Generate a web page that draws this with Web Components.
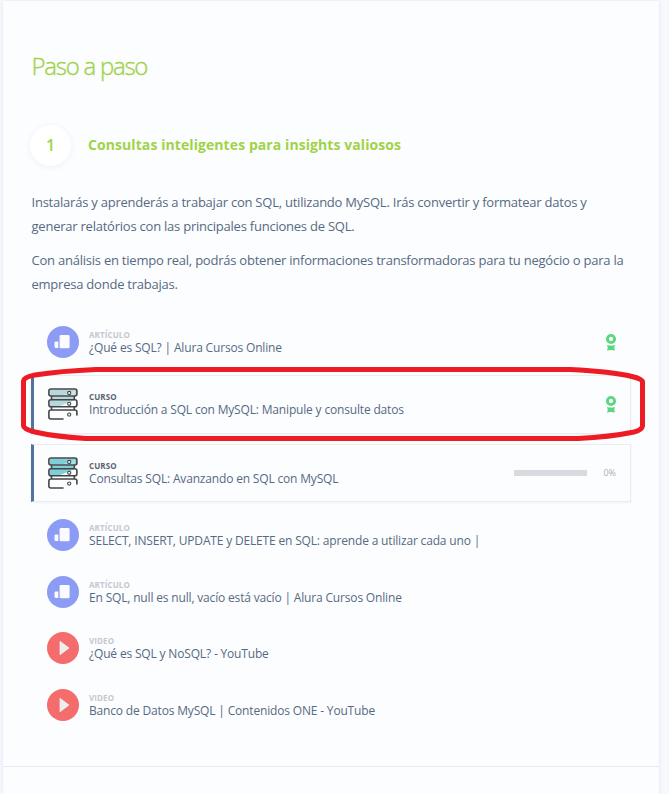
<!DOCTYPE html>
<html lang="es">
<head>
<meta charset="utf-8">
<title>Paso a paso</title>
<style>
html,body{margin:0;height:794px;overflow:hidden}
body{background:#f7f9fd;font-family:"Open Sans","Noto Sans",sans-serif;color:#566a83}
</style>
</head>
<body>
<step-page></step-page>
<script>
const ICONS={
articulo:`<svg width="32" height="32" viewBox="0 0 32 32"><circle cx="16" cy="16" r="16" fill="#8c9bf3"/><rect x="12.6" y="9" width="10" height="13.2" rx="1.3" fill="#fafaff"/><path d="M11.3 15.5v6.5H9.1q-1.6 0-1.6-1.6v-3.7q0-1.2 1.2-1.2z" fill="#fafaff"/></svg>`,
video:`<svg width="32" height="32" viewBox="0 0 32 32"><circle cx="16" cy="16" r="16" fill="#f56c6c"/><path d="M13 9.3 22 16l-9 6.8z" fill="#eee" stroke="#eee" stroke-width=".8" stroke-linejoin="round"/></svg>`,
curso:`<svg width="32" height="34" viewBox="0 0 32 34"><path class="t" d="M3 2.5h26v6H3zM5 9.5h22v3H5zM3 13h25L12 19.5H3z"/><path d="M28 3.5v5H15z" fill="#fff" opacity=".35"/><g fill="none" stroke="#434548" stroke-width="1.6" stroke-linecap="round"><rect x="1.9" y="2" width="28" height="7" rx="2"/><rect x="1.9" y="12.7" width="28" height="7" rx="2"/><path d="M4.5 9.5v2.7M27.3 9.5v2.7M4.5 20v2.6M27.3 20v2.6M16 32H4q-2.1 0-2.1-2v-5q0-2 2.1-2h23.9q2 0 2 2v3"/><g stroke-width="1.1" fill="#fcfdfe"><circle cx="22.2" cy="6" r="1.6"/><circle cx="22.2" cy="16.8" r="1.6"/><circle cx="22.2" cy="27.6" r="1.6"/></g></g></svg>`};
class StepPage extends HTMLElement{
 constructor(){super();this.attachShadow({mode:'open'}).innerHTML=`<style>
:host{display:block;position:relative;height:794px;padding:1px 10px 0 3px;box-sizing:border-box}
main{height:793px;box-sizing:border-box;background:#fcfdfe;box-shadow:0 0 4px #dfe5ef;padding:47px 28px 0}
h1{font-weight:300;font-size:24px;line-height:36px;letter-spacing:-1.25px;color:#9fd34a;-webkit-text-stroke:.35px #9fd34a;margin:0 0 0 .5px}
p{font-size:13px;line-height:23.7px;margin:0;letter-spacing:-.23px;white-space:nowrap}
.intro{padding:25px 0 0 .5px;display:grid;gap:10.6px}
.list{padding-top:17px}
footer{margin:32.4px -28px 0;border-top:1px solid #e6eaf3}
</style><main><h1>Paso a paso</h1><step-heading number="1">Consultas inteligentes para insights valiosos</step-heading>
<div class="intro"><p>Instalarás y aprenderás a trabajar con SQL, utilizando MySQL. Irás convertir y formatear datos y<br>generar relatórios con las principales funciones de SQL.</p><p>Con análisis en tiempo real, podrás obtener informaciones transformadoras para tu negócio o para la<br>empresa donde trabajas.</p></div>
<div class="list">
<step-item kind="articulo" label="ARTÍCULO" done>¿Qué es SQL? | Alura Cursos Online</step-item>
<step-item kind="curso" label="CURSO" done muted>Introducción a SQL con MySQL: Manipule y consulte datos</step-item>
<step-item kind="curso" label="CURSO" progress="0%">Consultas SQL: Avanzando en SQL con MySQL</step-item>
<step-item kind="articulo" label="ARTÍCULO">SELECT, INSERT, UPDATE y DELETE en SQL: aprende a utilizar cada uno |</step-item>
<step-item kind="articulo" label="ARTÍCULO">En SQL, null es null, vacío está vacío | Alura Cursos Online</step-item>
<step-item kind="video" label="VIDEO">¿Qué es SQL y NoSQL? - YouTube</step-item>
<step-item kind="video" label="VIDEO">Banco de Datos MySQL | Contenidos ONE - YouTube</step-item>
</div><footer></footer></main><red-marker></red-marker>`}}
class StepHeading extends HTMLElement{
 constructor(){super();this.attachShadow({mode:'open'}).innerHTML=`<style>
:host{display:flex;align-items:center;gap:17px;margin:40px 0 0 -1px;height:42px;color:#9fd34a;font-weight:700}
b{width:41px;height:41px;line-height:41px;border-radius:50%;background:#fff;box-shadow:0 1px 6px #edf0f4;text-align:center;font-size:16px;font-weight:600}
h2{margin:0 0 1px;font-size:14px;line-height:20px;letter-spacing:.08px;white-space:nowrap}
</style><b></b><h2><slot></slot></h2>`}
 connectedCallback(){this.shadowRoot.querySelector('b').textContent=this.getAttribute('number')}}
class StepItem extends HTMLElement{
 connectedCallback(){const k=this.getAttribute('kind'),pr=this.getAttribute('progress');
 this.attachShadow({mode:'open'}).innerHTML=`<style>
:host{display:flex;align-items:center;box-sizing:border-box;height:56.6px;padding:0 14px 0 16px}
:host([kind=curso]){height:58.5px;border:1px solid #eaecf2;border-left:3px solid #50749f;padding:0 13px;margin:5px 0 10px;box-shadow:0 1px 2px #f0f2f6}
:host([kind=curso][progress]){padding-right:14px;margin:0 0 5px}
svg{display:block;flex:none}
.icon{width:32px;margin-right:10px}.t{fill:#7ed0d6}:host([muted]) .t{fill:#b7d8da}
.text{flex:1;white-space:nowrap;padding-top:1px}
small{display:block;font-size:8px;font-weight:700;line-height:10px;letter-spacing:.1px;color:#c5c8d0}
:host([kind=curso]) small{color:#5c6470}
span{display:block;font-size:12px;line-height:15px;letter-spacing:-.17px}
.bar{width:73px;height:6px;background:#d8dae0;margin-right:16px}
em{font-style:normal;font-size:9px;font-weight:500;color:#a9aeb8}
</style><div class="icon">${ICONS[k]}</div><div class="text"><small>${this.getAttribute('label')}</small><span><slot></slot></span></div>${pr?`<div class="bar"></div><em>${pr}</em>`:''}${this.hasAttribute('done')?`<svg width="12" height="18" viewBox="0 0 12 18"><circle cx="6" cy="6" r="3.6" fill="none" stroke="#5bd87f" stroke-width="2.9"/><path d="M2 12q4 1.2 8 0l-.8 2.8.8 2.8q-4-1.2-8 0l.8-2.8z" fill="#5bd87f"/></svg>`:''}`}}
class RedMarker extends HTMLElement{
 constructor(){super();this.attachShadow({mode:'open'}).innerHTML=`<style>:host{position:absolute;left:0;top:360px;display:block}svg{display:block}</style><svg width="669" height="90" viewBox="0 360 669 90"><path d="M23.5 381Q24 377 35 375Q60 371 96 369.5H570Q612 371.5 632 376.5Q642.5 379 642.5 382V426Q642 430 634 432Q610 437 578 438.5H86Q54 436.5 35 432Q23.5 429 23.5 426Z" fill="none" stroke="#ed1c24" stroke-width="5"/></svg>`}}
customElements.define('step-heading',StepHeading);customElements.define('step-item',StepItem);customElements.define('red-marker',RedMarker);customElements.define('step-page',StepPage);
</script>
</body></html>
